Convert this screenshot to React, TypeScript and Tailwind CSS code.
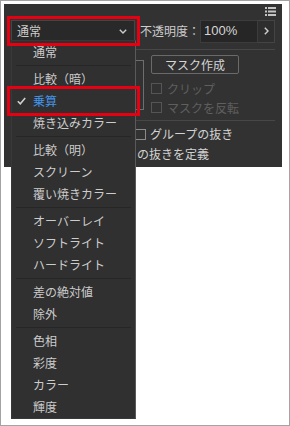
import React from "react";

type MenuEntry = { label: string; checked?: boolean } | "sep";

const blendModes: MenuEntry[] = [
  { label: "通常" },
  "sep",
  { label: "比較（暗）" },
  { label: "乗算", checked: true },
  { label: "焼き込みカラー" },
  "sep",
  { label: "比較（明）" },
  { label: "スクリーン" },
  { label: "覆い焼きカラー" },
  "sep",
  { label: "オーバーレイ" },
  { label: "ソフトライト" },
  { label: "ハードライト" },
  "sep",
  { label: "差の絶対値" },
  { label: "除外" },
  "sep",
  { label: "色相" },
  { label: "彩度" },
  { label: "カラー" },
  { label: "輝度" },
];

const Checkbox = ({ disabled }: { disabled?: boolean }) => (
  <span
    className={
      "inline-block w-[11px] h-[11px] border " +
      (disabled ? "border-[#555555]" : "border-[#8a8a8a]")
    }
  />
);

const PanelMenuIcon = () => (
  <svg width="11" height="9" viewBox="0 0 11 9" fill="#c4c4c4">
    <rect x="0" y="0" width="2" height="2" />
    <rect x="3" y="0" width="8" height="2" />
    <rect x="0" y="3.5" width="2" height="2" />
    <rect x="3" y="3.5" width="8" height="2" />
    <rect x="0" y="7" width="2" height="2" />
    <rect x="3" y="7" width="8" height="2" />
  </svg>
);

const App = () => {
  return (
    <div className="relative w-[290px] h-[426px] bg-white border border-[#a3a3a3] pl-[3px] pt-[3px] overflow-hidden font-['Noto_Sans_CJK_JP',sans-serif] text-[12px] text-[#cccccc]">
      {/* transparency panel */}
      <div className="w-[278px] h-[163px] bg-[#323232] flex flex-col">
        <div className="h-[15px] flex items-center justify-end pr-[6px]">
          <PanelMenuIcon />
        </div>

        <div className="h-[24px] flex items-center pl-[7px]">
          <div className="w-[124px] h-[22px] bg-[#292929] border border-[#454545] flex items-center justify-between pl-[5px] pr-[7px]">
            <span className="leading-none">通常</span>
            <svg width="8" height="5" viewBox="0 0 8 5">
              <path d="M0.8 0.8 L4 4 L7.2 0.8" fill="none" stroke="#cccccc" strokeWidth="1.4" />
            </svg>
          </div>
          <span className="ml-[5px] leading-none whitespace-nowrap">不透明度：</span>
          <div className="h-[23px] w-[58px] bg-[#262626] border border-[#3c3c3c] flex items-center pl-[3px] font-['Liberation_Sans',sans-serif] text-[13px] text-[#d6d6d6]">
            100%
          </div>
          <div className="h-[23px] w-[17px] bg-[#2e2e2e] border border-[#444444] border-l-0 flex items-center justify-center">
            <svg width="5" height="8" viewBox="0 0 5 8">
              <path d="M0.8 0.8 L4 4 L0.8 7.2" fill="none" stroke="#d0d0d0" strokeWidth="1.4" />
            </svg>
          </div>
        </div>

        <div className="mt-[6px] mx-[7px] h-px bg-[#474747]" />

        <div className="mt-[5px] flex pl-[7px]">
          <div className="w-[133px] flex justify-end">
            <div className="mt-[5px] w-[40px] h-[50px] border border-[#6e6e6e]" />
          </div>
          <div className="ml-[7px] flex flex-col">
            <div className="w-[88px] h-[19px] border border-[#6a6a6a] rounded-[2px] flex items-center justify-center text-[#d4d4d4] leading-none">
              マスク作成
            </div>
            <div className="mt-[5px] h-[19px] flex items-center gap-[5px] text-[#5f5f5f]">
              <Checkbox disabled />
              <span className="leading-none">クリップ</span>
            </div>
            <div className="h-[19px] flex items-center gap-[5px] text-[#5f5f5f]">
              <Checkbox disabled />
              <span className="leading-none">マスクを反転</span>
            </div>
          </div>
        </div>

        <div className="mt-[3px] mx-[7px] h-px bg-[#474747]" />

        <div className="mt-[3px] h-[20px] flex items-center pl-[131px] gap-[4px] text-[#d2d2d2]">
          <Checkbox />
          <span className="leading-none">グループの抜き</span>
        </div>
        <div className="h-[20px] flex items-center pl-[133px] text-[#d2d2d2] whitespace-nowrap">
          <span className="leading-none">の抜きを定義</span>
        </div>
      </div>

      {/* blend mode dropdown */}
      <div className="absolute left-[10px] top-[39px] w-[125px] bg-[#303030] border border-[#383838] border-r-[#5a5a5a] flex flex-col">
        {blendModes.map((m, i) =>
          m === "sep" ? (
            <div key={i} className="h-[5px] flex items-center px-[4px]">
              <div className="w-full h-px bg-[#262626]" />
            </div>
          ) : (
            <div key={i} className="relative h-[22px] flex items-center pl-[21px]">
              {m.checked && (
                <svg className="absolute left-[5px] top-[7px]" width="9" height="8" viewBox="0 0 9 8">
                  <path d="M0.8 4.2 L3.3 6.7 L8.2 0.9" fill="none" stroke="#cfcfcf" strokeWidth="1.6" />
                </svg>
              )}
              <span className={"leading-none " + (m.checked ? "text-[#4294ea]" : "")}>{m.label}</span>
            </div>
          )
        )}
      </div>

      {/* highlight frames */}
      <div className="absolute left-[6px] top-[15px] w-[133px] h-[30px] border-[3px] border-[#e60012]" />
      <div className="absolute left-[6px] top-[85px] w-[133px] h-[30px] border-[3px] border-[#e60012]" />
    </div>
  );
};

export default App;
